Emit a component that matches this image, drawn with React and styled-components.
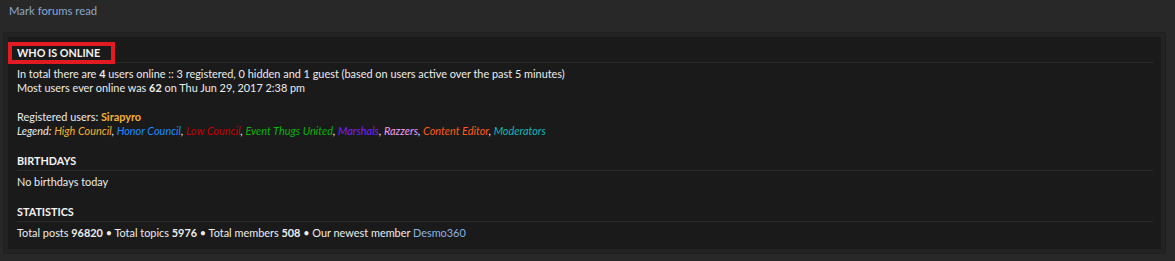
import React from "react";
import styled, { createGlobalStyle } from "styled-components";

const GlobalStyle = createGlobalStyle`
  html, body {
    margin: 0;
    padding: 0;
    background: #282828;
    font-family: Lato, "Open Sans", sans-serif;
    color: #ececec;
  }
`;

const Page = styled.div`
  width: 1175px;
  height: 261px;
  overflow: hidden;
`;

const TopBar = styled.div`
  height: 32px;
  padding: 4px 9px 0;
  box-sizing: border-box;
  font-size: 11.3px;
  line-height: 14px;
`;

const Link = styled.a`
  color: ${props => props.color || "#8aa7cf"};
  text-decoration: none;
  font-weight: ${props => (props.strong ? 700 : 400)};
`;

const Outer = styled.div`
  margin-left: 3px;
  width: 1163px;
  box-sizing: border-box;
  background: #232323;
  border: 1px solid #1f1f1f;
  padding: 4px;
`;

const Panel = styled.div`
  position: relative;
  background: #1a1a1a;
  padding: 4px 8px 9px 9px;
`;

const Heading = styled.h3`
  margin: ${props => (props.first ? "0" : "11px")} 0 4px;
  padding: 5px 0 2px;
  font-size: 10.8px;
  line-height: 14px;
  font-weight: 700;
  text-transform: uppercase;
  color: #f4f4f4;
  border-bottom: 1px solid #2a2a2a;
`;

const Text = styled.p`
  margin: 0;
  font-size: 10.9px;
  line-height: 14px;
  color: #ececec;
  & + & {
    margin-top: 15px;
  }
`;

const Legend = styled.em`
  display: block;
`;

const Group = styled.span`
  color: ${props => props.color};
`;

const Marker = styled.div`
  position: absolute;
  left: 0px;
  top: 5px;
  width: 107px;
  height: 22px;
  box-sizing: border-box;
  border: 4px solid #e21b23;
  pointer-events: none;
`;

const groups = [
  ["High Council", "#f2b130"],
  ["Honor Council", "#1a8cff"],
  ["Low Council", "#c40000"],
  ["Event Thugs United", "#08b308"],
  ["Marshals", "#7a1fff"],
  ["Razzers", "#f59bf5"],
  ["Content Editor", "#ff5b14"],
  ["Moderators", "#10b8b8"],
];

export default function App() {
  return (
    <Page>
      <GlobalStyle />
      <TopBar>
        <Link href="#">Mark forums read</Link>
      </TopBar>
      <Outer>
        <Panel>
          <Marker />
          <Heading first>Who is online</Heading>
          <Text>
            In total there are <b>4</b> users online :: 3 registered, 0 hidden
            and 1 guest (based on users active over the past 5 minutes)
            <br />
            Most users ever online was <b>62</b> on Thu Jun 29, 2017 2:38 pm
          </Text>
          <Text>
            Registered users:{" "}
            <Link href="#" color="#f2b130" strong>
              Sirapyro
            </Link>
            <Legend>
              Legend:{" "}
              {groups.map(([name, color], i) => (
                <React.Fragment key={name}>
                  <Group color={color}>{name}</Group>
                  {i < groups.length - 1 ? ", " : ""}
                </React.Fragment>
              ))}
            </Legend>
          </Text>
          <Heading>Birthdays</Heading>
          <Text>No birthdays today</Text>
          <Heading>Statistics</Heading>
          <Text>
            Total posts <b>96820</b> • Total topics <b>5976</b> • Total members{" "}
            <b>508</b> • Our newest member{" "}
            <Link href="#" color="#8ab2e6">
              Desmo360
            </Link>
          </Text>
        </Panel>
      </Outer>
    </Page>
  );
}
